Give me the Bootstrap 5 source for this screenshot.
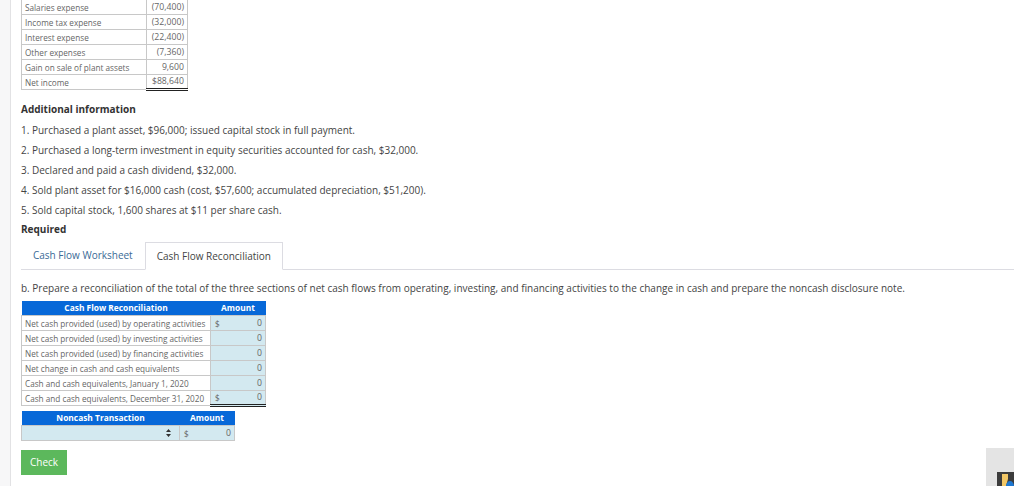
<!DOCTYPE html>
<html lang="en">
<head>
  <meta charset="UTF-8" />
  <title>Cash Flow Reconciliation</title>
  <link href="https://cdn.jsdelivr.net/npm/bootstrap@5.3.0/dist/css/bootstrap.min.css" rel="stylesheet">
  <style>
    html, body { height: 486px; overflow: hidden; }
    body { font-family: "Open Sans", "Liberation Sans", sans-serif; font-size: 10px; color: #333; background: #fff; }
    .page-wrap { height: 486px; }
    .side-strip { width: 11px; flex: none; background: #f7f7f8; border-right: 1px solid #e2e2e4; }
    .main-col { padding: 0 0 0 10px; min-width: 0; flex: 1; }
    .sheet { border-collapse: collapse; table-layout: fixed; font-size: 8.2px; color: #666; }
    .sheet td, .sheet th { border: 1px solid #c8c8c8; height: 15px; padding: 0 3px; line-height: 13px; white-space: nowrap; }
    .sheet .num { text-align: right; font-size: 8.7px; }
    .sheet .rule-top { border-top: 1px solid #222; }
    .sheet .rule-dbl { border-bottom: 3px double #222; }
    .income-tbl { width: 167px; margin-top: -1px; }
    .income-tbl td:first-child { width: 125px; }
    .sec-title { font-weight: 700; font-size: 10px; color: #333; margin: 0; line-height: 13px; }
    .info-line { margin: 0; height: 20px; line-height: 20px; font-size: 10px; color: #444; }
    .need-title { margin-top: 3px; }
    .tab-row { border-bottom: 1px solid #dcdce2; height: 28px; margin-top: 6px; }
    .tab-item { padding: 0 12px; line-height: 27px; font-size: 10px; height: 28px; color: #3a6a96; }
    .tab-item.on { color: #444; border: 1px solid #dcdce2; border-bottom: 1px solid #fff; background: #fff; padding: 0 11px; }
    .ask-line { margin: 12px 0 6px; font-size: 10px; line-height: 13px; color: #444; white-space: nowrap; }
    .sheet .head-cell { background: #0768d8; color: #fff; font-weight: 700; font-size: 8.4px; text-align: center; border: 0; height: 14px; line-height: 14px; }
    .sheet .fill { background: #d3e9f0; }
    .recon-tbl { width: 245px; }
    .noncash-tbl { width: 214px; margin-top: 4px; }
    .sheet .in-dollar { border-right: 0; padding: 0 2px 0 4px; }
    .sheet .in-amount { border-left: 0; }
    .sheet .pick-cell { padding-right: 8px; }
    .sort-mark { display: block; margin-left: auto; }
    .check-btn { background: #5cb85c; color: #fff; font-size: 10px; width: 46px; height: 25px; line-height: 25px; margin-top: 9px; }
    .corner-box { position: absolute; right: 0; bottom: 0; width: 28px; height: 38px; background: #e4e4e4; }
    .corner-icon { position: absolute; right: 0; bottom: 0; }
  </style>
</head>
<body>
  <div class="page-wrap d-flex">
    <div class="side-strip"></div>
    <div class="main-col">
      <table class="sheet income-tbl">
        <tr><td>Salaries expense</td><td class="num">(70,400)</td></tr>
        <tr><td>Income tax expense</td><td class="num">(32,000)</td></tr>
        <tr><td>Interest expense</td><td class="num">(22,400)</td></tr>
        <tr><td>Other expenses</td><td class="num">(7,360)</td></tr>
        <tr><td>Gain on sale of plant assets</td><td class="num">9,600</td></tr>
        <tr><td>Net income</td><td class="num rule-top rule-dbl">$88,640</td></tr>
      </table>

      <p class="sec-title mt-2 pt-1 mb-1">Additional information</p>
      <p class="info-line">1. Purchased a plant asset, $96,000; issued capital stock in full payment.</p>
      <p class="info-line">2. Purchased a long-term investment in equity securities accounted for cash, $32,000.</p>
      <p class="info-line">3. Declared and paid a cash dividend, $32,000.</p>
      <p class="info-line">4. Sold plant asset for $16,000 cash (cost, $57,600; accumulated depreciation, $51,200).</p>
      <p class="info-line">5. Sold capital stock, 1,600 shares at $11 per share cash.</p>
      <p class="sec-title need-title">Required</p>

      <div class="tab-row d-flex">
        <div class="tab-item">Cash Flow Worksheet</div>
        <div class="tab-item on">Cash Flow Reconciliation</div>
      </div>

      <p class="ask-line">b. Prepare a reconciliation of the total of the three sections of net cash flows from operating, investing, and financing activities to the change in cash and prepare the noncash disclosure note.</p>

      <table class="sheet recon-tbl">
        <colgroup><col style="width:189px"><col style="width:12px"><col></colgroup>
        <tr><th class="head-cell">Cash Flow Reconciliation</th><th class="head-cell" colspan="2">Amount</th></tr>
        <tr><td>Net cash provided (used) by operating activities</td><td class="fill in-dollar">$</td><td class="fill in-amount num">0</td></tr>
        <tr><td>Net cash provided (used) by investing activities</td><td class="fill in-dollar"></td><td class="fill in-amount num">0</td></tr>
        <tr><td>Net cash provided (used) by financing activities</td><td class="fill in-dollar"></td><td class="fill in-amount num">0</td></tr>
        <tr><td>Net change in cash and cash equivalents</td><td class="fill in-dollar rule-top"></td><td class="fill in-amount num rule-top">0</td></tr>
        <tr><td>Cash and cash equivalents, January 1, 2020</td><td class="fill in-dollar"></td><td class="fill in-amount num">0</td></tr>
        <tr><td>Cash and cash equivalents, December 31, 2020</td><td class="fill in-dollar rule-top rule-dbl">$</td><td class="fill in-amount num rule-top rule-dbl">0</td></tr>
      </table>

      <table class="sheet noncash-tbl">
        <colgroup><col style="width:158px"><col style="width:12px"><col></colgroup>
        <tr><th class="head-cell">Noncash Transaction</th><th class="head-cell" colspan="2">Amount</th></tr>
        <tr>
          <td class="fill pick-cell">
            <svg class="sort-mark" width="5" height="8" viewBox="0 0 5 8"><path d="M2.5 0 5 3H0zM2.5 8 0 5h5z" fill="#333"/></svg>
          </td>
          <td class="fill in-dollar">$</td><td class="fill in-amount num">0</td>
        </tr>
      </table>

      <button type="button" class="btn check-btn d-block p-0 border-0 rounded-0">Check</button>
    </div>
  </div>

  <div class="corner-box">
    <svg class="corner-icon" width="17" height="14" viewBox="0 0 17 14">
      <rect width="17" height="14" fill="#3c3c3c"/>
      <path d="M5 2h6v5l-2 7H5z" fill="#f2c766"/>
      <path d="M9 14c0-3 2-5 4-5s4 2 4 5z" fill="#1e78d2"/>
    </svg>
  </div>
</body>
</html>
